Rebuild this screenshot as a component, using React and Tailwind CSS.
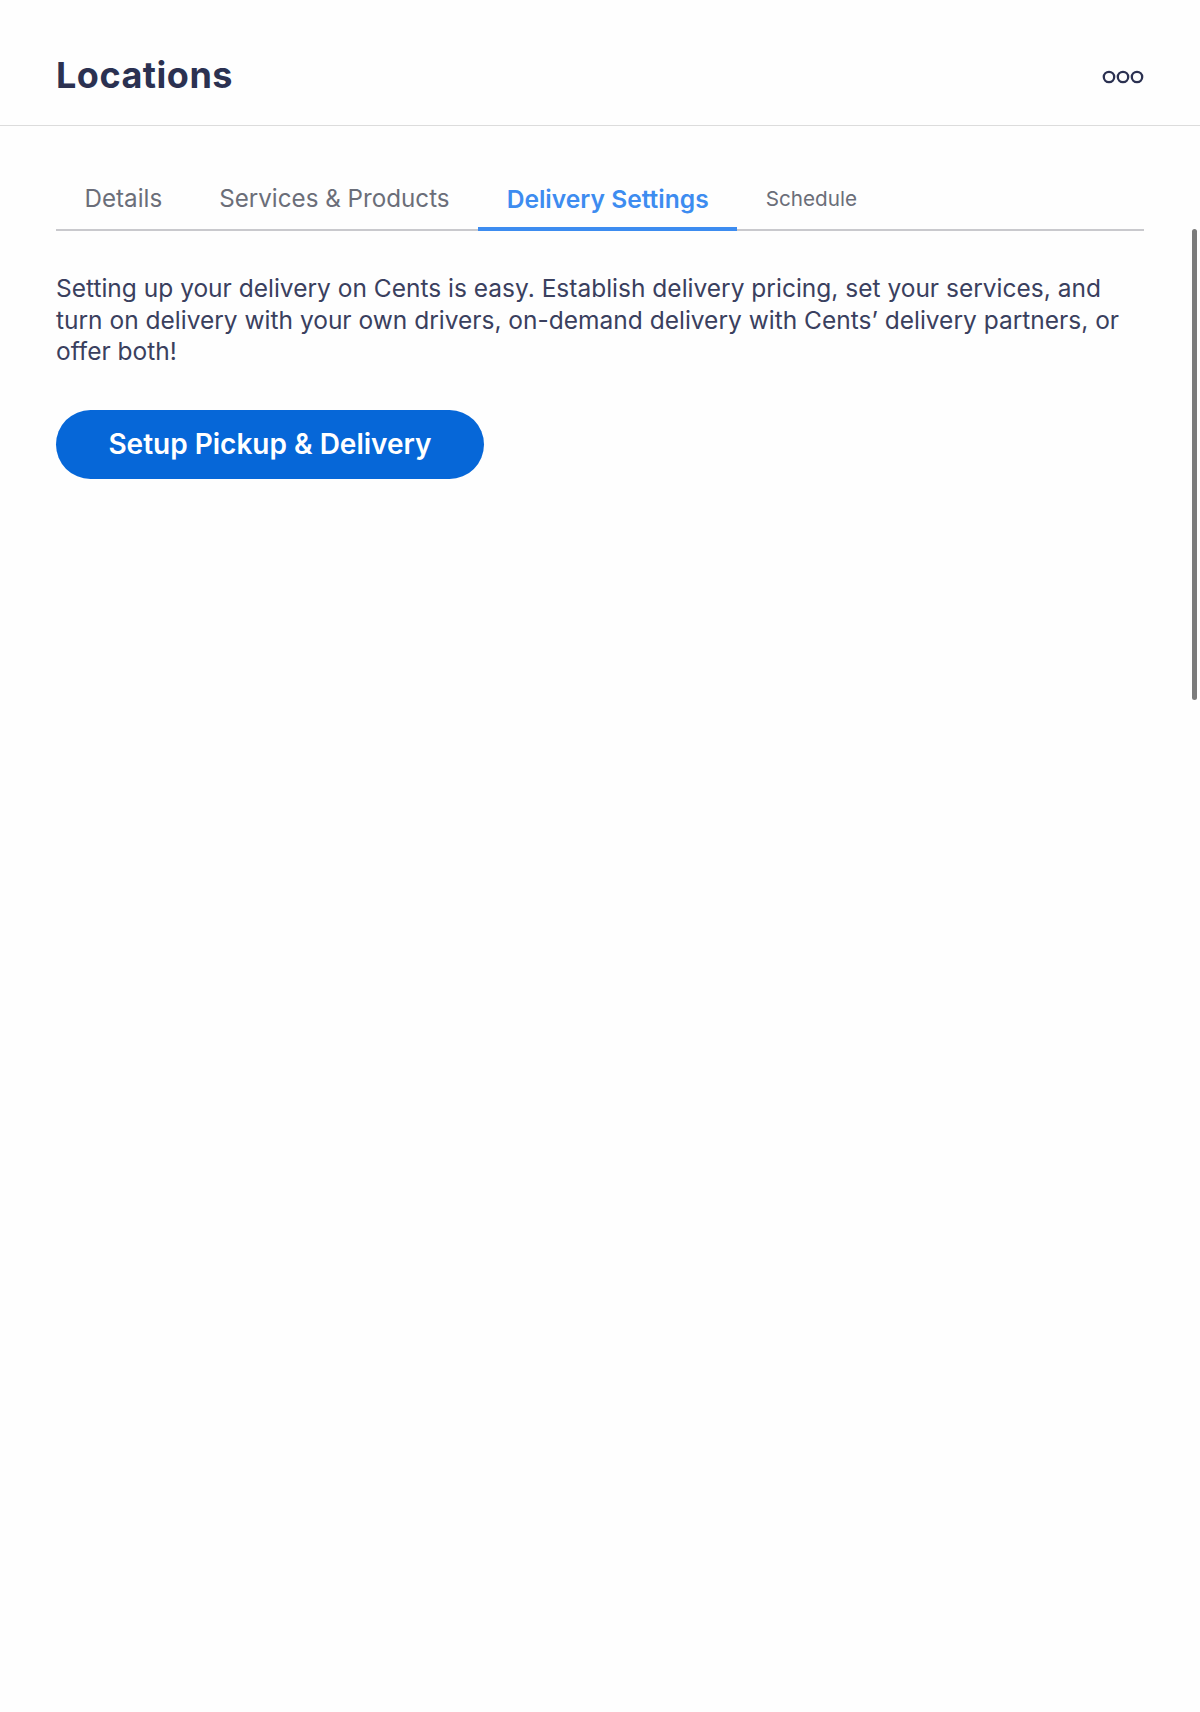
import React, { useState } from "react";

const tabs = ["Details", "Services & Products", "Delivery Settings", "Schedule"];

function MoreIcon() {
  return (
    <svg width="42" height="14" viewBox="0 0 42 14" fill="none" stroke="#2b3151" strokeWidth="2.3">
      <circle cx="7" cy="7" r="5.2" />
      <circle cx="21" cy="7" r="5.2" />
      <circle cx="35" cy="7" r="5.2" />
    </svg>
  );
}

export default function App() {
  const [active, setActive] = useState("Delivery Settings");

  return (
    <div className="relative min-h-[1712px] bg-[#fefefe] font-['Inter',sans-serif]">
      {/* Header */}
      <div className="flex h-[126px] items-center justify-between border-b border-[#dcdcdc] px-[56px] pt-[25px]">
        <h1 className="text-[36px] font-bold leading-[36px] tracking-[0.5px] text-[#2b3151]">Locations</h1>
        <button className="mt-[4px]">
          <MoreIcon />
        </button>
      </div>

      <div className="px-[56px]">
        {/* Tabs */}
        <div className="mt-[57px] flex border-b-2 border-[#c9c9cd]">
          {tabs.map((tab) => (
            <button
              key={tab}
              onClick={() => setActive(tab)}
              className={
                "-mb-[2px] border-b-[4px] px-[28.5px] pb-[12px] leading-[32px] " +
                (active === tab
                  ? "border-[#3d8cf0] text-[24.6px] font-semibold text-[#3d8cf0]"
                  : tab === "Schedule"
                  ? "border-transparent text-[20.7px] text-[#6b6e79]"
                  : "border-transparent text-[24.2px] text-[#6b6e79]")
              }
            >
              {tab}
            </button>
          ))}
        </div>

        {/* Delivery settings content */}
        <p className="mt-[42px] text-[24.5px] leading-[31.5px] text-[#3a405e]">
          Setting up your delivery on Cents is easy. Establish delivery pricing, set your services, and turn on
          delivery with your own drivers, on-demand delivery with Cents’ delivery partners, or offer both!
        </p>

        <button className="mt-[42px] flex h-[69px] w-[428px] items-center justify-center rounded-full bg-[#0667d8] text-[28px] font-semibold text-white">
          Setup Pickup & Delivery
        </button>
      </div>

      {/* scrollbar thumb */}
      <div className="absolute right-[3px] top-[229px] h-[471px] w-[5px] rounded-full bg-[#7b7b7b]" />
    </div>
  );
}
